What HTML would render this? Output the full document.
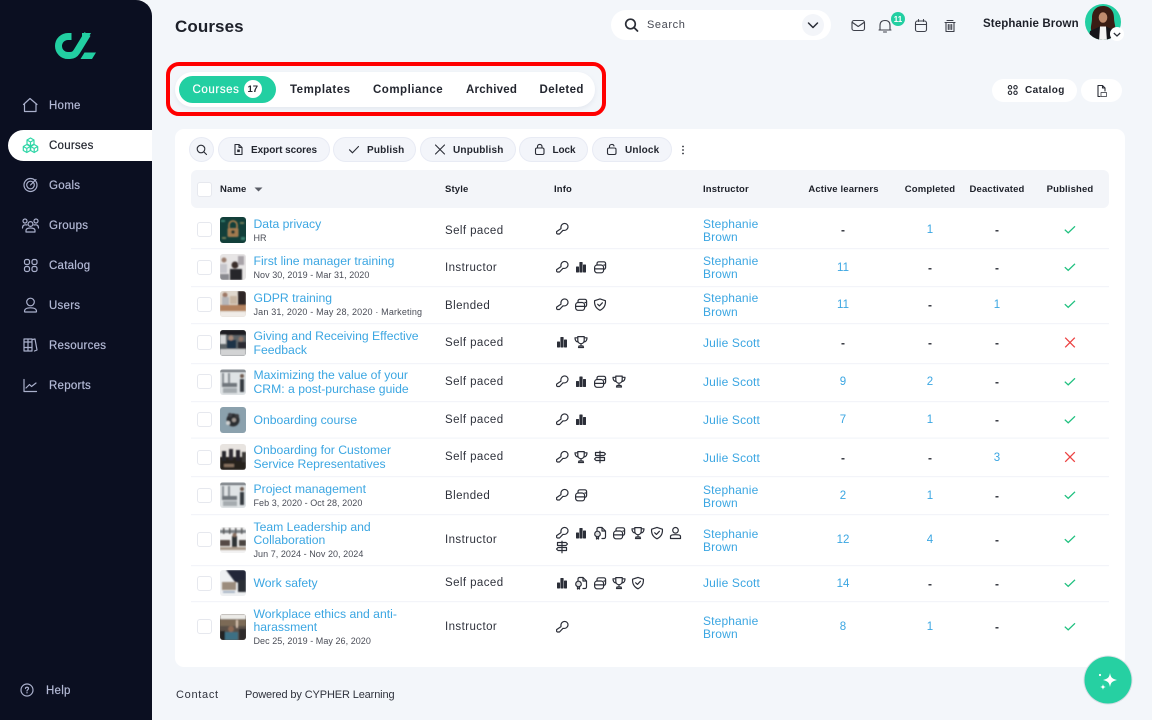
<!DOCTYPE html>
<html><head><meta charset="utf-8"><title>Courses</title>
<style>
*{box-sizing:border-box}
html,body{margin:0;padding:0;width:1152px;height:720px;overflow:hidden;background:#f3f6fa;font-family:"Liberation Sans",sans-serif;color:#23262f}
div{position:absolute}
.t{white-space:nowrap;line-height:14px;height:14px}
.n{left:49px;margin-top:1px;font-size:11.5px;color:#b4bad6;letter-spacing:.25px;-webkit-text-stroke:.2px #b4bad6}
.l{left:253.5px;font-size:12.2px;color:#3ba6e2;letter-spacing:0}
.s{left:253.5px;margin-top:1px;font-size:9px;color:#4a4d57;letter-spacing:.05px}
.d{left:445px;margin-top:1px;font-size:11.5px;color:#2f323c;letter-spacing:.42px}
.i{left:703px;font-size:12px;color:#3ba6e2;letter-spacing:.15px}
.h{margin-top:1px;font-size:9.5px;font-weight:700;color:#1d2029;letter-spacing:.15px}
.c{margin-top:1px;transform:translateX(-50%);font-size:11.5px;color:#3ba6e2}
.m{margin-top:1px;transform:translateX(-50%);font-size:12px;font-weight:700;color:#30333c}
.b{margin-top:1px;font-size:10px;font-weight:700;color:#23262f;letter-spacing:.18px}
.tb{margin-top:1px;font-size:11.5px;font-weight:700;color:#23262f;letter-spacing:.5px}
.btn{background:#f3f5fa;border:1px solid #e8ebf4;border-radius:13px;top:137px;height:25px}
.cb{left:197px;width:15px;height:15px;border:1.5px solid #e6e8ee;border-radius:3px;background:#fff}
</style></head><body>

<div style="left:0;top:0;width:152px;height:720px;background:#0b0f21;border-top-right-radius:16px"></div>
<div style="left:8px;top:130px;width:144px;height:31px;background:#fff;border-radius:16px 0 0 16px"></div>
<div class="t n" style="top:98px">Home</div>
<div class="t n" style="top:138px;color:#23262f;-webkit-text-stroke:.2px #23262f">Courses</div>
<div class="t n" style="top:178px">Goals</div>
<div class="t n" style="top:218px">Groups</div>
<div class="t n" style="top:258px">Catalog</div>
<div class="t n" style="top:298px">Users</div>
<div class="t n" style="top:338px">Resources</div>
<div class="t n" style="top:378px">Reports</div>
<div class="t n" style="top:683px;left:46px">Help</div>

<div class="t" style="left:175px;top:20px;font-size:17px;font-weight:700;color:#1d2029;letter-spacing:.1px">Courses</div>

<div style="left:611px;top:10px;width:220px;height:30px;background:#fff;border-radius:15px"></div>
<div style="left:802px;top:14px;width:22px;height:22px;background:#f3f5f9;border-radius:11px"></div>
<div class="t" style="left:647px;top:18px;font-size:11px;color:#454852;letter-spacing:.6px">Search</div>
<div class="t" style="left:983px;top:17px;font-size:11.5px;font-weight:700;color:#1d2029;letter-spacing:.12px">Stephanie Brown</div>

<div style="left:175px;top:72px;width:420px;height:35px;background:#fff;border-radius:18px;box-shadow:0 2px 5px rgba(160,170,195,.18)"></div>
<div style="left:179px;top:76px;width:97px;height:27px;background:#22cfa2;border-radius:14px"></div>
<div style="left:244px;top:80px;width:18px;height:18px;background:#fff;border-radius:9px"></div>
<div class="t" style="left:192.5px;top:83px;font-size:11.5px;color:#fff;letter-spacing:.6px;-webkit-text-stroke:.2px #fff">Courses</div>
<div class="t" style="left:247.5px;top:83px;font-size:9.5px;font-weight:700;color:#23262f">17</div>
<div class="t tb" style="left:290px;top:82px">Templates</div>
<div class="t tb" style="left:373px;top:82px">Compliance</div>
<div class="t tb" style="left:466px;top:82px;letter-spacing:.25px">Archived</div>
<div class="t tb" style="left:539.5px;top:82px;letter-spacing:.4px">Deleted</div>
<div style="left:166px;top:62px;width:440px;height:54px;border:4px solid #f00;border-radius:13px"></div>

<div style="left:992px;top:79px;width:85px;height:23px;background:#fff;border-radius:12px"></div>
<div style="left:1081px;top:79px;width:41px;height:23px;background:#fff;border-radius:12px"></div>
<div class="t b" style="left:1025px;top:83px;letter-spacing:.45px">Catalog</div>

<div style="left:175px;top:129px;width:950px;height:538px;background:#fff;border-radius:9px"></div>
<div class="btn" style="left:189px;width:25px"></div>
<div class="btn" style="left:218px;width:112px"></div>
<div class="btn" style="left:333px;width:83px"></div>
<div class="btn" style="left:420px;width:96px"></div>
<div class="btn" style="left:519px;width:69px"></div>
<div class="btn" style="left:592px;width:80px"></div>
<div class="t b" style="left:251px;top:143px;letter-spacing:-.05px">Export scores</div>
<div class="t b" style="left:367px;top:143px">Publish</div>
<div class="t b" style="left:453px;top:143px">Unpublish</div>
<div class="t b" style="left:552.5px;top:143px;letter-spacing:-.1px">Lock</div>
<div class="t b" style="left:625px;top:143px">Unlock</div>

<div style="left:191px;top:170px;width:918px;height:38px;background:#f3f5f9;border-radius:6px"></div>
<div class="t h" style="left:220px;top:182px">Name</div>
<div class="t h" style="left:445px;top:182px">Style</div>
<div class="t h" style="left:554px;top:182px">Info</div>
<div class="t h" style="left:703px;top:182px">Instructor</div>
<div class="t h" style="left:843.5px;top:182px;transform:translateX(-50%)">Active learners</div>
<div class="t h" style="left:930px;top:182px;transform:translateX(-50%)">Completed</div>
<div class="t h" style="left:997px;top:182px;transform:translateX(-50%)">Deactivated</div>
<div class="t h" style="left:1070px;top:182px;transform:translateX(-50%)">Published</div>

<div class="cb" style="top:182px"></div>
<div class="cb" style="top:222px"></div><div class="cb" style="top:260px"></div><div class="cb" style="top:297px"></div>
<div class="cb" style="top:335px"></div><div class="cb" style="top:374px"></div><div class="cb" style="top:412px"></div>
<div class="cb" style="top:450px"></div><div class="cb" style="top:488px"></div><div class="cb" style="top:532px"></div>
<div class="cb" style="top:576px"></div><div class="cb" style="top:619px"></div>

<!-- names -->
<div class="t l" style="top:217px">Data privacy</div><div class="t s" style="top:230px">HR</div>
<div class="t l" style="top:254px">First line manager training</div><div class="t s" style="top:267px">Nov 30, 2019 - Mar 31, 2020</div>
<div class="t l" style="top:291px">GDPR training</div><div class="t s" style="top:304px;letter-spacing:.17px">Jan 31, 2020 - May 28, 2020 · Marketing</div>
<div class="t l" style="top:329px">Giving and Receiving Effective</div><div class="t l" style="top:343px">Feedback</div>
<div class="t l" style="top:368px">Maximizing the value of your</div><div class="t l" style="top:382px">CRM: a post-purchase guide</div>
<div class="t l" style="top:413px">Onboarding course</div>
<div class="t l" style="top:443px">Onboarding for Customer</div><div class="t l" style="top:457px">Service Representatives</div>
<div class="t l" style="top:482px">Project management</div><div class="t s" style="top:495px">Feb 3, 2020 - Oct 28, 2020</div>
<div class="t l" style="top:520px">Team Leadership and</div><div class="t l" style="top:533px">Collaboration</div><div class="t s" style="top:546px">Jun 7, 2024 - Nov 20, 2024</div>
<div class="t l" style="top:576px">Work safety</div>
<div class="t l" style="top:607px">Workplace ethics and anti-</div><div class="t l" style="top:620px">harassment</div><div class="t s" style="top:633px">Dec 25, 2019 - May 26, 2020</div>

<!-- style -->
<div class="t d" style="top:223px">Self paced</div><div class="t d" style="top:260px">Instructor</div><div class="t d" style="top:297.5px">Blended</div>
<div class="t d" style="top:335px">Self paced</div><div class="t d" style="top:374px">Self paced</div><div class="t d" style="top:412px">Self paced</div>
<div class="t d" style="top:449px">Self paced</div><div class="t d" style="top:487.5px">Blended</div><div class="t d" style="top:532px">Instructor</div>
<div class="t d" style="top:575px">Self paced</div><div class="t d" style="top:619px">Instructor</div>

<!-- instructor -->
<div class="t i" style="top:217px">Stephanie</div><div class="t i" style="top:230px">Brown</div>
<div class="t i" style="top:254px">Stephanie</div><div class="t i" style="top:267px">Brown</div>
<div class="t i" style="top:291px">Stephanie</div><div class="t i" style="top:305px">Brown</div>
<div class="t i" style="top:336px">Julie Scott</div><div class="t i" style="top:375px">Julie Scott</div><div class="t i" style="top:413px">Julie Scott</div><div class="t i" style="top:451px">Julie Scott</div>
<div class="t i" style="top:483px">Stephanie</div><div class="t i" style="top:496px">Brown</div>
<div class="t i" style="top:527px">Stephanie</div><div class="t i" style="top:540px">Brown</div>
<div class="t i" style="top:576px">Julie Scott</div>
<div class="t i" style="top:614px">Stephanie</div><div class="t i" style="top:627px">Brown</div>

<!-- numbers -->
<div class="t m" style="left:843px;top:222px">-</div><div class="t c" style="left:930px;top:222px">1</div><div class="t m" style="left:997px;top:222px">-</div>
<div class="t c" style="left:843px;top:260px">11</div><div class="t m" style="left:930px;top:260px">-</div><div class="t m" style="left:997px;top:260px">-</div>
<div class="t c" style="left:843px;top:297px">11</div><div class="t m" style="left:930px;top:297px">-</div><div class="t c" style="left:997px;top:297px">1</div>
<div class="t m" style="left:843px;top:335px">-</div><div class="t m" style="left:930px;top:335px">-</div><div class="t m" style="left:997px;top:335px">-</div>
<div class="t c" style="left:843px;top:374px">9</div><div class="t c" style="left:930px;top:374px">2</div><div class="t m" style="left:997px;top:374px">-</div>
<div class="t c" style="left:843px;top:412px">7</div><div class="t c" style="left:930px;top:412px">1</div><div class="t m" style="left:997px;top:412px">-</div>
<div class="t m" style="left:843px;top:450px">-</div><div class="t m" style="left:930px;top:450px">-</div><div class="t c" style="left:997px;top:450px">3</div>
<div class="t c" style="left:843px;top:488px">2</div><div class="t c" style="left:930px;top:488px">1</div><div class="t m" style="left:997px;top:488px">-</div>
<div class="t c" style="left:843px;top:532px">12</div><div class="t c" style="left:930px;top:532px">4</div><div class="t m" style="left:997px;top:532px">-</div>
<div class="t c" style="left:843px;top:576px">14</div><div class="t m" style="left:930px;top:576px">-</div><div class="t m" style="left:997px;top:576px">-</div>
<div class="t c" style="left:843px;top:619px">8</div><div class="t c" style="left:930px;top:619px">1</div><div class="t m" style="left:997px;top:619px">-</div>

<div class="t" style="left:176px;top:688px;font-size:11px;color:#2f323c;letter-spacing:.7px">Contact</div>
<div class="t" style="left:245px;top:688px;font-size:11px;color:#2f323c;letter-spacing:-.13px">Powered by CYPHER Learning</div>

<svg width="1152" height="720" viewBox="0 0 1152 720" style="position:absolute;left:0;top:0">
<defs>
<g id="key" fill="none" stroke="#2b2e38" stroke-width="1.15" stroke-linejoin="round" stroke-linecap="round"><path d="M6 6.600C5.400 3.800 7.200 1.400 9.600 1.400 11.500 1.400 13 2.900 13 4.800 13 7.200 10.700 8.900 8 8.300L4.500 12H2.300L1.600 11.300V9.600Z"/></g>
<g id="bars" fill="#2b2e38"><rect x="2" y="6.500" width="3" height="6" rx=".6"/><rect x="5.400" y="2" width="3.200" height="10.500" rx=".6"/><rect x="9" y="4.500" width="3" height="8" rx=".6"/></g>
<g id="stack" fill="none" stroke="#2b2e38" stroke-width="1.2" stroke-linejoin="round"><rect x="1.6" y="5" width="9" height="7.8" rx="2.6"/><path d="M1.6 8.900h9M4 5V3.600A1.800 1.800 0 0 1 5.800 1.800H10.800A1.800 1.800 0 0 1 12.600 3.600V7.500A1.800 1.800 0 0 1 10.800 9.300M10.500 5h2"/></g>
<g id="shield" fill="none" stroke="#2b2e38" stroke-width="1.2" stroke-linejoin="round" stroke-linecap="round"><path d="M7 1.400 12.400 3.200C12.800 7.800 10.800 11 7 12.800 3.200 11 1.200 7.800 1.600 3.200Z"/><path d="M4.700 6.800 6.400 8.400 9.400 5.300"/></g>
<g id="trophy" fill="none" stroke="#2b2e38" stroke-width="1.2" stroke-linejoin="round" stroke-linecap="round"><path d="M3.800 1.600h6.400V5.500A3.200 3.200 0 0 1 3.800 5.500ZM3.800 2.800H1C1 5.500 2 6.800 4 7M10.200 2.800H13C13 5.500 12 6.800 10 7M7 8.700V11M4.500 12.500H9.500L9 11H5Z"/></g>
<g id="cert" fill="none" stroke="#2b2e38" stroke-width="1.2" stroke-linejoin="round" stroke-linecap="round"><path d="M4 4.500V3A1.500 1.500 0 0 1 5.500 1.500H9L12.500 5V11A1.500 1.500 0 0 1 11 12.500H9M9 1.500V5H12.500"/><circle cx="4.500" cy="8" r="2.800" fill="#2b2e38" fill-opacity=".15"/><path d="M3.500 10.500V13L4.500 12.300 5.500 13V10.500"/></g>
<g id="person" fill="none" stroke="#2b2e38" stroke-width="1.2" stroke-linejoin="round"><circle cx="7" cy="4.300" r="2.800"/><path d="M2 10.500C2 9 3.500 8.700 7 8.700 10.500 8.700 12 9 12 10.500V12.500H2Z"/></g>
<g id="sign" fill="none" stroke="#2b2e38" stroke-width="1.2" stroke-linejoin="round"><path d="M7 .800V13.200M2.500 2.500H11L12.500 4 11 5.500H2.500ZM11.500 7.500H3L1.500 9 3 10.500H11.500Z"/></g>
<path id="ok" d="M-5.200 .2-1.800 3.400 5 -3.200" fill="none" stroke="#1fc07f" stroke-width="1.3"/>
<path id="no" d="M-4.800 -4.800 4.800 4.800M4.800 -4.800-4.800 4.800" fill="none" stroke="#ec4242" stroke-width="1.3"/>
<clipPath id="tc"><rect width="26" height="26" rx="3"/></clipPath>
<clipPath id="av"><circle cx="1103" cy="22" r="18"/></clipPath>
<filter id="bl" x="-10%" y="-10%" width="120%" height="120%"><feGaussianBlur stdDeviation=".7"/></filter>
<g id="t1" clip-path="url(#tc)"><rect width="26" height="26" fill="#123f3a"/><g filter="url(#bl)"><path d="M9 11V8a4 4 0 0 1 8 0v3" fill="none" stroke="#b8844e" stroke-width="1.5"/><rect x="7.500" y="11" width="11" height="9" rx="1.5" fill="#a27a4f"/><circle cx="13" cy="15" r="1.800" fill="#16352f"/><rect x="1" y="3" width="4" height="2" fill="#37806e"/><rect x="21" y="20" width="4" height="3" fill="#37806e"/><rect x="20" y="5" width="4" height="2" fill="#6f7c58"/><rect x="2" y="20" width="4" height="2" fill="#6f7c58"/></g></g>
<g id="t2" clip-path="url(#tc)"><rect width="26" height="26" fill="#e7e5e5"/><g filter="url(#bl)"><rect x="10" y="15" width="12" height="11" fill="#25252c"/><circle cx="15" cy="11" r="3.500" fill="#3a2f2c"/><rect x="0" y="10" width="7" height="9" fill="#c6c5cb"/><circle cx="4" cy="6" r="2.500" fill="#9a7d6e"/><rect x="18" y="2" width="6" height="9" fill="#a8a3a8"/><rect x="0" y="20" width="9" height="6" fill="#8a8a90"/></g></g>
<g id="t3" clip-path="url(#tc)"><rect width="26" height="26" fill="#e0d8ce"/><g filter="url(#bl)"><rect x="18" y="0" width="8" height="15" fill="#2d2826"/><rect x="0" y="14" width="26" height="6" fill="#b3825f"/><circle cx="5" cy="4" r="2.500" fill="#9d7763"/><rect x="2" y="6" width="7" height="8" fill="#b6b6b8"/><rect x="10" y="5" width="7" height="8" fill="#c7b5a2"/><rect x="0" y="21" width="26" height="5" fill="#f0ece8"/></g></g>
<g id="t4" clip-path="url(#tc)"><rect width="26" height="26" fill="#5d6468"/><g filter="url(#bl)"><rect x="0" y="0" width="26" height="5" fill="#1c1d20"/><rect x="0" y="5" width="6" height="9" fill="#d6d8d9"/><rect x="7" y="10" width="9" height="9" fill="#1e3247"/><circle cx="11" cy="8" r="2.500" fill="#a98a79"/><rect x="18" y="12" width="8" height="9" fill="#2c2c30"/><circle cx="21" cy="9" r="2.500" fill="#8f7366"/><rect x="0" y="19" width="26" height="7" fill="#d2d3d4"/></g></g>
<g id="t5" clip-path="url(#tc)"><rect width="26" height="26" fill="#dfe3e5"/><g filter="url(#bl)"><rect x="0" y="1" width="26" height="2" fill="#6a7075"/><rect x="2" y="4" width="2" height="10" fill="#898f94"/><rect x="8" y="4" width="2" height="10" fill="#898f94"/><rect x="20" y="10" width="4" height="13" fill="#343a3f"/><circle cx="22" cy="7" r="2" fill="#6d5a50"/><rect x="2" y="14" width="15" height="4" fill="#70767b"/><rect x="3" y="19" width="14" height="5" fill="#a5abaf"/></g></g>
<g id="t6" clip-path="url(#tc)"><rect width="26" height="26" fill="#8ba1ad"/><g filter="url(#bl)"><circle cx="13" cy="13" r="6.500" fill="#2b2d30"/><circle cx="10" cy="8" r="2" fill="#40434a"/><circle cx="17" cy="9" r="2" fill="#3b3a3c"/><circle cx="8" cy="16" r="2" fill="#d0d1d1"/><circle cx="14" cy="13" r="2" fill="#a29a94"/></g></g>
<g id="t7" clip-path="url(#tc)"><rect width="26" height="26" fill="#e8e4e0"/><g filter="url(#bl)"><rect x="0" y="13" width="26" height="13" fill="#26211f"/><rect x="2" y="7" width="4" height="10" fill="#26252a"/><rect x="9" y="5" width="4" height="11" fill="#2d2c33"/><rect x="16" y="6" width="4" height="11" fill="#25242a"/><rect x="22" y="8" width="4" height="10" fill="#3b3835"/><rect x="4" y="20" width="10" height="3" fill="#85705e"/></g></g>
<g id="t8" clip-path="url(#tc)"><rect width="26" height="26" fill="#f2f2f2"/><g filter="url(#bl)"><rect x="0" y="3" width="26" height="3" fill="#7e8286"/><rect x="3" y="1" width="1.5" height="6" fill="#555"/><rect x="9" y="1" width="1.5" height="6" fill="#555"/><rect x="15" y="1" width="1.5" height="6" fill="#555"/><rect x="21" y="1" width="1.5" height="6" fill="#555"/><rect x="12" y="9" width="5" height="12" fill="#2d3136"/><circle cx="14.500" cy="8" r="2" fill="#8a6f60"/><rect x="0" y="13" width="10" height="6" fill="#544a44"/><rect x="19" y="13" width="7" height="6" fill="#4c4541"/><rect x="0" y="20" width="26" height="3" fill="#aa9b8c"/></g></g>
<g id="t9" clip-path="url(#tc)"><rect width="26" height="26" fill="#eef0f2"/><g filter="url(#bl)"><path d="M6 0H26V14L15 12Z" fill="#202838"/><rect x="18" y="10" width="8" height="12" fill="#2c2f35"/><rect x="2" y="12" width="14" height="8" fill="#9b8c7d"/><rect x="3" y="21" width="12" height="2" fill="#a8b5c5"/></g></g>
<g id="t10" clip-path="url(#tc)"><rect width="26" height="26" fill="#5a5048"/><g filter="url(#bl)"><rect width="26" height="5" fill="#ecebe8"/><rect y="5" width="26" height="7" fill="#7c6a56"/><circle cx="11" cy="15" r="3" fill="#8e6a55"/><rect x="5" y="18" width="13" height="8" fill="#3e6f84"/><rect x="0" y="17" width="5" height="9" fill="#222"/><rect x="19" y="15" width="7" height="11" fill="#2e2b2a"/><rect x="16" y="6" width="2" height="8" fill="#d4c0ad"/></g></g>
</defs>

<!-- row separators -->
<g fill="#f3f4f9"><rect x="191" y="248" width="918" height="1.2"/><rect x="191" y="286" width="918" height="1.2"/><rect x="191" y="323" width="918" height="1.2"/><rect x="191" y="363" width="918" height="1.2"/><rect x="191" y="401" width="918" height="1.2"/><rect x="191" y="437.500" width="918" height="1.2"/><rect x="191" y="476" width="918" height="1.2"/><rect x="191" y="514" width="918" height="1.2"/><rect x="191" y="565" width="918" height="1.2"/><rect x="191" y="601" width="918" height="1.2"/></g>

<!-- logo -->
<g fill="none" stroke="#22cfa2" stroke-width="7"><path d="M71.500 36.500H68A9.300 9.300 0 0 0 68 55.500H70C73.500 55.500 75.200 54 76.800 51.500L87.500 34"/></g>
<path d="M84.500 52.500H96L92 59H80.500Z" fill="#22cfa2"/>
<path d="M82 33H91L88 38H82Z" fill="#22cfa2"/>

<!-- nav icons -->
<g fill="none" stroke="#aab0cc" stroke-width="1.2" stroke-linejoin="round" stroke-linecap="round">
<path d="M23.500 104.500 30 98.500 37 104.500M24.500 103.500V111.500H36V103.500"/>
<circle cx="30.500" cy="185" r="6.500"/><circle cx="30.500" cy="185" r="3.800"/><path d="M30.500 185 36 179.500"/>
<circle cx="25" cy="221" r="2"/><circle cx="36" cy="221" r="2"/><circle cx="30.500" cy="224" r="2.400"/><path d="M22.500 228C22.500 225 24.500 224.500 27 225M38.500 228C38.500 225 36.500 224.500 34 225M26 232V230.500C26 228.500 28 228 30.500 228S35 228.500 35 230.500V232Z"/>
<rect x="24.500" y="259.500" width="5" height="5" rx="1.800"/><rect x="32" y="259.500" width="5" height="5" rx="1.800"/><rect x="24.500" y="266.500" width="5" height="5" rx="1.800"/><rect x="32" y="266.500" width="5" height="5" rx="1.800"/>
<circle cx="30.500" cy="302" r="3.800"/><path d="M24.500 311.500C24.500 309 26 307.800 30.500 307.800S36.500 309 36.500 311.500C36.500 312 36 312 36 312H25C24.500 312 24.500 312 24.500 311.500Z"/>
<path d="M24 339H28V351H24ZM28 339H32V351H28ZM32.500 339.500 35 339 37 350 34.500 351M24 342H28M28 342H32M24 347.500H32"/>
<path d="M24 379.500V391.500H36.500M26 388 29.500 384.500 31.500 386.500 36 383"/>
<g stroke="#2fd6a7"><path d="M30.500 138 34 140V144L30.500 146 27 144V140ZM27 140 30.500 142 34 140M30.500 142V146"/>
<path d="M26.800 144.500 30.300 146.500V150.500L26.800 152.500 23.300 150.500V146.500ZM23.300 146.500 26.800 148.500 30.300 146.500M26.800 148.500V152.500"/>
<path d="M34.200 144.500 37.700 146.500V150.500L34.200 152.500 30.700 150.500V146.500ZM30.700 146.500 34.200 148.500 37.700 146.500M34.200 148.500V152.500"/></g>
<circle cx="27" cy="690" r="6"/><path d="M25.500 688.500C25.500 686.800 28.500 686.800 28.500 688.500 28.500 689.700 27 689.700 27 691"/>
</g>
<circle cx="27" cy="692.800" r=".7" fill="#aab0cc"/>

<!-- top icons -->
<g fill="none" stroke="#2a2d36" stroke-linecap="round" stroke-linejoin="round">
<circle cx="630.500" cy="24" r="4.800" stroke-width="1.7"/><path d="M634 27.500 637.500 31" stroke-width="1.7"/>
<path d="M808.500 23 813 27.500 817.500 23" stroke-width="1.5"/>
<g stroke="#3d404a" stroke-width="1.1">
<rect x="852" y="20.500" width="12.500" height="10" rx="2"/><path d="M852.500 22.500 858.200 26.500 864 22.500"/>
<path d="M880 30V25.500C880 22 882 20.500 885 20.500S890 22 890 25.500V30ZM879 30H891M883.500 32H886.500"/>
<rect x="915.500" y="21" width="11" height="10.500" rx="2"/><path d="M915.500 24.500H926.500M918.500 19.500V21.500M923.500 19.500V21.500"/>
<path d="M945 22.500H955M947 20.500H953M946 22.500V31.500H954V22.500M948.300 24.500V29.500M950 24.500V29.500M951.700 24.500V29.500"/>
</g>
<circle cx="1010" cy="87.300" r="1.700" stroke-width="1.1"/><circle cx="1015.500" cy="87.300" r="1.700" stroke-width="1.1"/><circle cx="1010" cy="92.800" r="1.700" stroke-width="1.1"/><circle cx="1015.500" cy="92.800" r="1.700" stroke-width="1.1"/>
<path d="M1098 96.500V85.500H1102.500L1105 88V91M1102.500 85.500V88H1105M1098 96.500H1100" stroke-width="1.1"/>
<path d="M1101 92.500H1106.500V96.500H1101Z" stroke-width=".7"/>
</g>
<circle cx="898" cy="19" r="7" fill="#22cfa2"/>
<text x="898" y="22" text-anchor="middle" font-family="Liberation Sans" font-size="8" font-weight="700" fill="#fff">11</text>

<!-- avatar -->
<circle cx="1103" cy="22" r="18" fill="#22cfa2"/>
<g clip-path="url(#av)">
<path d="M1103 6C1095 6 1092 12 1092 18 1092 25 1089 29 1093 33H1114C1117 28 1114 24 1114 18 1114 11 1110 6 1103 6Z" fill="#3a1d14"/>
<ellipse cx="1103" cy="17.500" rx="4.300" ry="5.300" fill="#c08c6e"/>
<path d="M1088 42 1090 31 1100 26.500H1106L1116 31 1118 42Z" fill="#15151a"/>
<path d="M1100 26.500H1106L1107 42H1099Z" fill="#f4f4f4"/>
</g>
<circle cx="1117" cy="34" r="7" fill="#fff"/>
<path d="M1113.800 33 1117 36 1120.200 33" fill="none" stroke="#2a2d36" stroke-width="1.2"/>

<!-- toolbar icons -->
<g fill="none" stroke="#2a2d36" stroke-width="1.1" stroke-linejoin="round" stroke-linecap="round">
<circle cx="201" cy="149" r="3.800"/><path d="M204 152 206.500 154.500"/>
<path d="M235 144.500H239L242 147.500V154.500H235ZM239 144.500V147.500H242"/><rect x="237.200" y="149.500" width="2.600" height="2.600" fill="#2a2d36" stroke="none"/>
<path d="M349.500 149.800 352.500 152.800 358.500 146.500"/>
<path d="M435.500 145 444.500 154M444.500 145 435.500 154"/>
<rect x="535.500" y="148" width="8.500" height="6.500" rx="1.500"/><path d="M537.500 148V146.500C537.500 143.800 542 143.800 542 146.500V148"/>
<rect x="607.500" y="148" width="8.500" height="6.500" rx="1.500"/><path d="M609.500 148V146.500C609.500 144 613.500 143.800 614 146"/>
</g>
<circle cx="683" cy="146.500" r=".9" fill="#2a2d36"/><circle cx="683" cy="150" r=".9" fill="#2a2d36"/><circle cx="683" cy="153.500" r=".9" fill="#2a2d36"/>
<path d="M254.500 187.500H262.500L258.500 191.500Z" fill="#5a5d66"/>

<!-- thumbs -->
<use href="#t1" x="220" y="217"/><use href="#t2" x="220" y="254"/><use href="#t3" x="220" y="291"/><use href="#t4" x="220" y="330"/>
<use href="#t5" x="220" y="369"/><use href="#t6" x="220" y="407"/><use href="#t7" x="220" y="444"/><use href="#t5" x="220" y="482"/>
<use href="#t8" x="220" y="527"/><use href="#t9" x="220" y="570"/><use href="#t10" x="220" y="614"/>

<!-- info icons -->
<use href="#key" x="555" y="222"/>
<use href="#key" x="555" y="260"/><use href="#bars" x="574" y="260"/><use href="#stack" x="593" y="260"/>
<use href="#key" x="555" y="297.500"/><use href="#stack" x="574" y="297.500"/><use href="#shield" x="593" y="297.500"/>
<use href="#bars" x="555" y="335"/><use href="#trophy" x="574" y="335"/>
<use href="#key" x="555" y="374.500"/><use href="#bars" x="574" y="374.500"/><use href="#stack" x="593" y="374.500"/><use href="#trophy" x="612" y="374.500"/>
<use href="#key" x="555" y="412.500"/><use href="#bars" x="574" y="412.500"/>
<use href="#key" x="555" y="450"/><use href="#trophy" x="574" y="450"/><use href="#sign" x="593" y="450"/>
<use href="#key" x="555" y="488"/><use href="#stack" x="574" y="488"/>
<use href="#key" x="555" y="526"/><use href="#bars" x="574" y="526"/><use href="#cert" x="593" y="526"/><use href="#stack" x="612" y="526"/><use href="#trophy" x="631" y="526"/><use href="#shield" x="650" y="526"/><use href="#person" x="668.500" y="526"/>
<use href="#sign" x="555" y="540"/>
<use href="#bars" x="555" y="576"/><use href="#cert" x="574" y="576"/><use href="#stack" x="593" y="576"/><use href="#trophy" x="612" y="576"/><use href="#shield" x="631" y="576"/>
<use href="#key" x="555" y="620"/>

<!-- status -->
<use href="#ok" x="1070" y="229.500"/><use href="#ok" x="1070" y="267"/><use href="#ok" x="1070" y="304"/><use href="#no" x="1070" y="342.500"/><use href="#ok" x="1070" y="381.500"/><use href="#ok" x="1070" y="419.500"/><use href="#no" x="1070" y="457"/><use href="#ok" x="1070" y="495"/><use href="#ok" x="1070" y="539"/><use href="#ok" x="1070" y="583"/><use href="#ok" x="1070" y="626.500"/>

<!-- fab -->
<circle cx="1108" cy="680" r="24.500" fill="#8d99a8" opacity=".28"/>
<circle cx="1108" cy="680" r="23.500" fill="#26d0a2"/>
<path d="M1110 673C1110.800 677.500 1112 678.700 1117 680 1112 681.300 1110.800 682.500 1110 687 1109.200 682.500 1108 681.300 1103 680 1108 678.700 1109.200 677.500 1110 673Z" fill="#fff"/>
<path d="M1103 684C1103.300 686 1104 686.700 1106 687 1104 687.300 1103.300 688 1103 690 1102.700 688 1102 687.300 1100 687 1102 686.700 1102.700 686 1103 684Z" fill="#fff"/>
<circle cx="1100" cy="675" r="1.100" fill="#fff"/>
</svg>
</body></html>
